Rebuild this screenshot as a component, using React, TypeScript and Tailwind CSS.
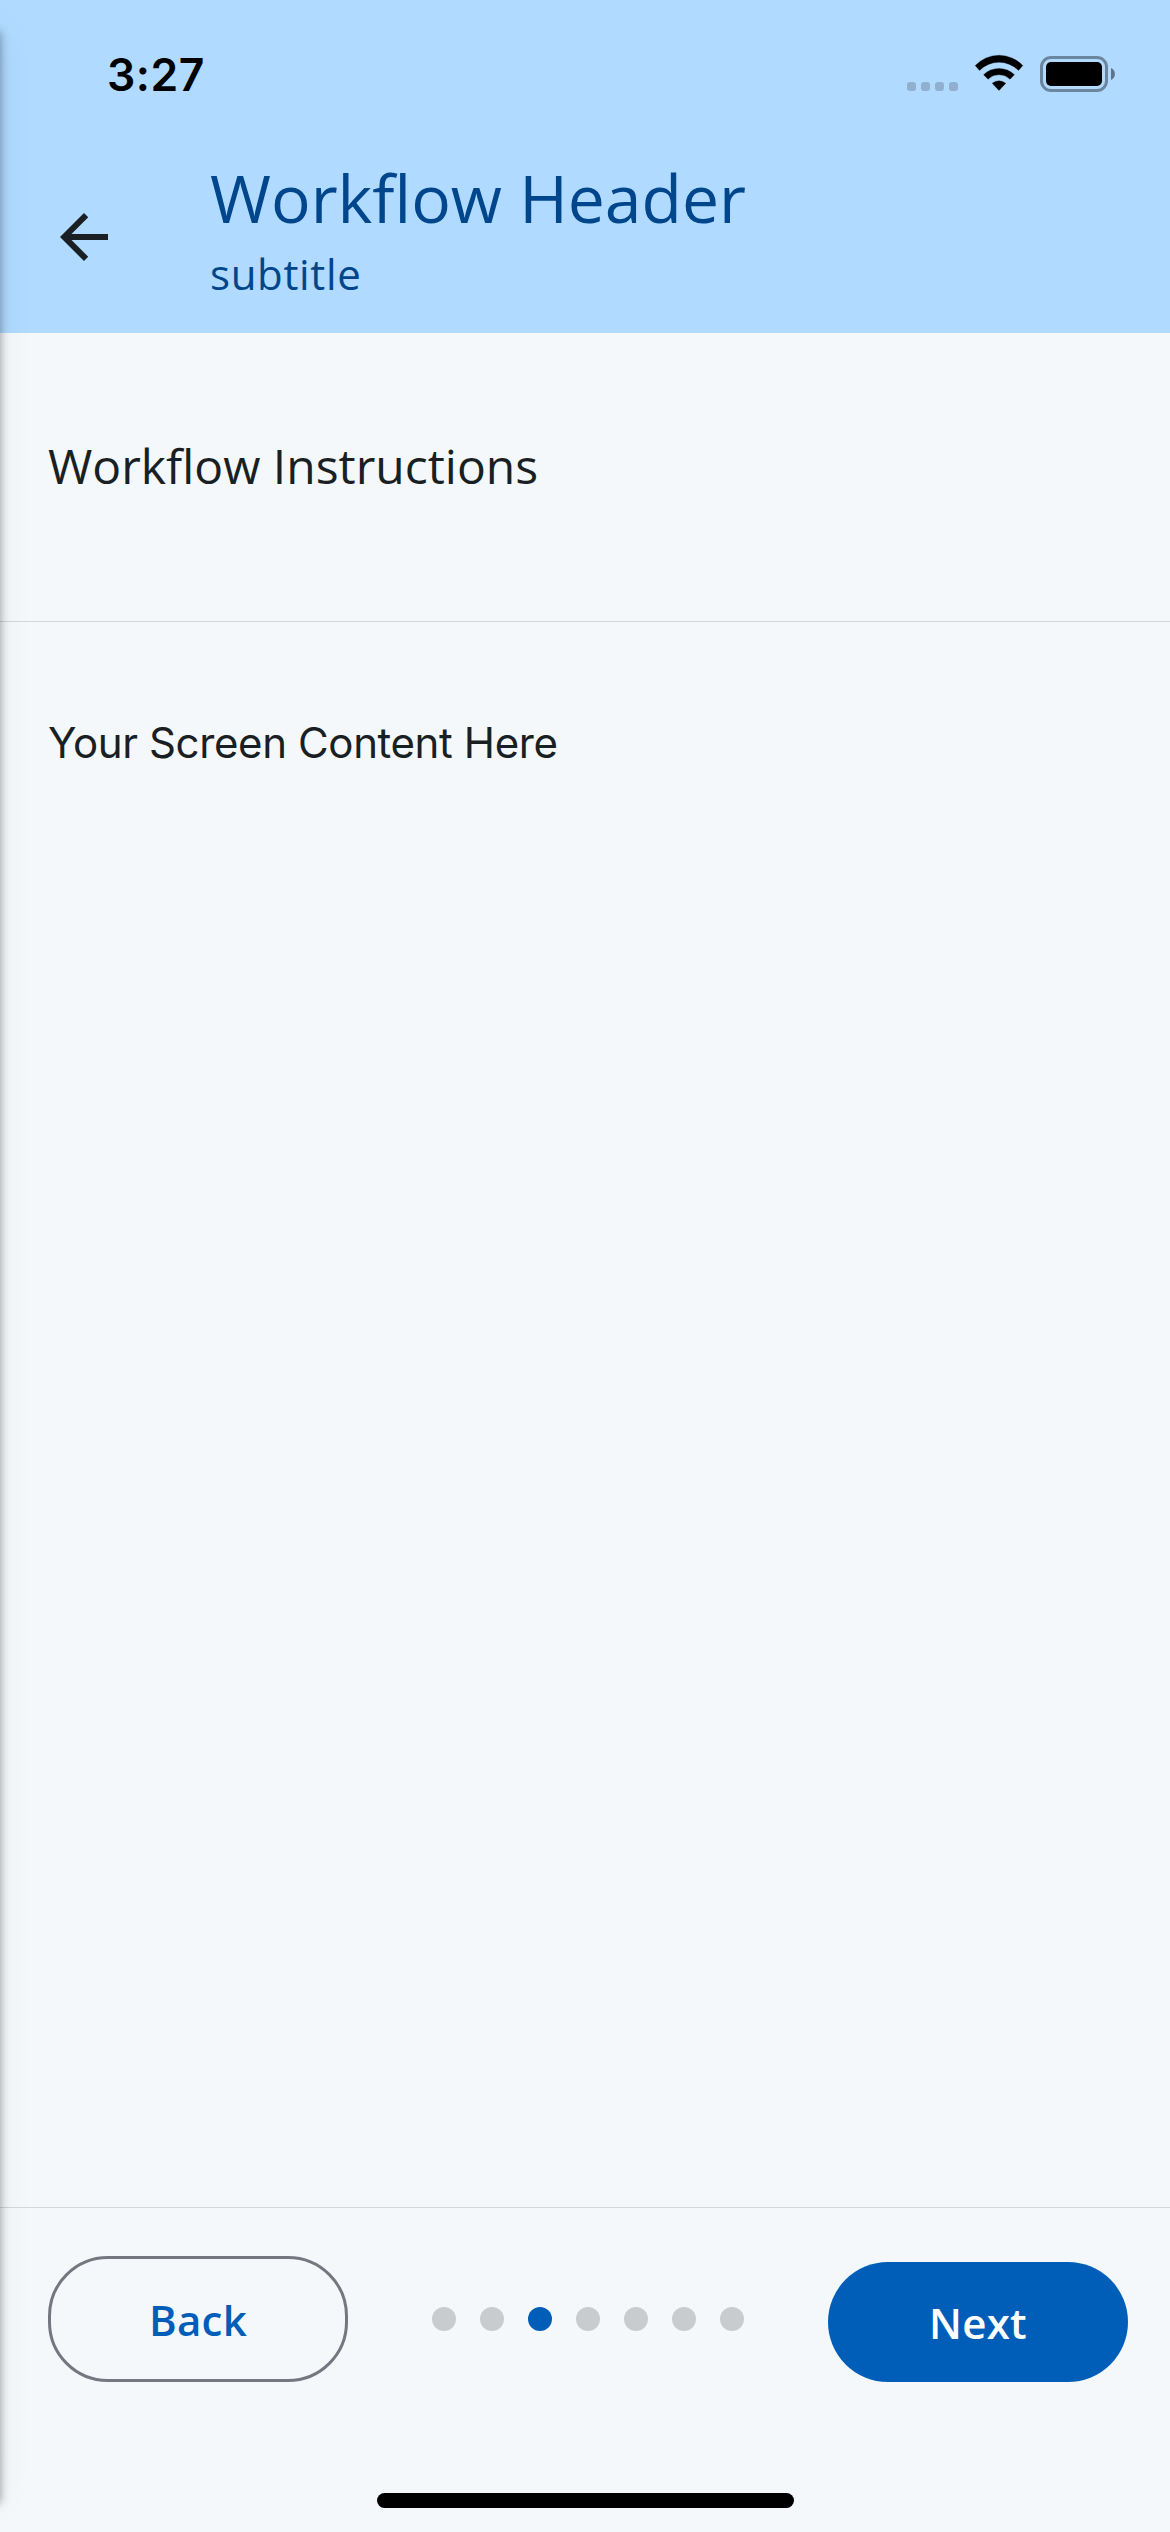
const STEPS = 7;
const ACTIVE_STEP = 2;

function StatusBar() {
  return (
    <div className="flex h-[141px] items-start justify-between pl-[107px] pr-[54px]">
      <div className="mt-[47px] font-['Inter',sans-serif] text-[44.5px] font-semibold leading-[56px] tracking-[0.5px] text-black">3:27</div>
      <div className="mt-[50px] flex">
        <div className="mt-[32px] flex gap-[5px]">
          {[0, 1, 2, 3].map((i) => (
            <span key={i} className="size-[9px] rounded-[3px] bg-[#91afce]" />
          ))}
        </div>
        <svg className="ml-[15px] h-[46px] w-[52px]" viewBox="0 0 52 46" fill="#000" stroke="#000" strokeWidth="0.3" strokeLinejoin="round">
          <path d="M2.2 15.6a32.5 32.5 0 0 1 47.6 0L45.5 20.4a27.5 27.5 0 0 0-39 0Z" />
          <path d="M10.6 24.7a22 22 0 0 1 30.8 0L37 29.2a16 16 0 0 0-22 0Z" />
          <path d="M19.2 33.3a10.5 10.5 0 0 1 13.6 0L26 40.4Z" />
        </svg>
        <svg className="ml-[15px] h-[46px] w-[76px]" viewBox="0 0 76 46">
          <rect x="1.5" y="7.5" width="65" height="33" rx="9.5" fill="none" stroke="#6d86a0" strokeWidth="3" />
          <rect x="6" y="12" width="56" height="24" rx="5" fill="#000" />
          <path d="M71 18a6.6 6.6 0 0 1 0 12Z" fill="#5d738a" />
        </svg>
      </div>
    </div>
  );
}

export default function App() {
  return (
    <div className="relative flex h-[2532px] w-[1170px] flex-col overflow-hidden bg-[#f4f8fb] font-['Open_Sans',sans-serif] text-[#191f22]">
      <header className="h-[333px] bg-[#b0daff]">
        <StatusBar />
        <div className="flex">
          <button className="ml-12 mt-[60px] size-[72px]" aria-label="Go back">
            <svg viewBox="0 0 24 24" fill="currentColor">
              <path d="M20 11H7.83l5.59-5.59L12 4l-8 8 8 8 1.41-1.41L7.83 13H20z" />
            </svg>
          </button>
          <div className="ml-[90px] mt-[11px] text-[#00468c]">
            <h1 className="text-[66px] leading-[90px]">Workflow Header</h1>
            <p className="mt-[2px] text-[42px] leading-[60px] tracking-[0.65px]">subtitle</p>
          </div>
        </div>
      </header>

      <section className="h-[289px] border-b border-[#d2d7da] pl-12 pt-[100px]">
        <p className="text-[48px] leading-[66px]">Workflow Instructions</p>
      </section>

      <main className="flex-1 pl-12 pt-[91px]">
        <p className="font-['Inter',sans-serif] text-[42px] leading-[60px] tracking-[-0.38px]">Your Screen Content Here</p>
      </main>

      <footer className="h-[325px] border-t border-[#d2d7da]">
        <div className="mt-12 flex h-[126px] items-center justify-between pl-12 pr-[42px]">
          <button className="h-[126px] w-[300px] rounded-[60px] border-3 border-[#74777f] text-[42px] font-semibold tracking-[0.3px] text-[#005eb8]">
            Back
          </button>
          <div className="flex gap-6">
            {Array.from({ length: STEPS }, (_, i) => (
              <span key={i} className={i === ACTIVE_STEP ? "size-6 rounded-full bg-[#005eb8]" : "size-6 rounded-full bg-[#c8cccf]"} />
            ))}
          </div>
          <button className="h-[120px] w-[300px] self-end rounded-[60px] bg-[#005eb8] text-[42px] font-semibold tracking-[0.3px] text-white">
            Next
          </button>
        </div>
        <div className="mx-auto mt-[111px] h-[15px] w-[417px] rounded-full bg-black" />
      </footer>

      {/* Edge shadow cast by the off-screen drawer */}
      <div className="pointer-events-none absolute -left-10 bottom-[29px] top-[32px] w-10 shadow-[0_0_9px_rgba(0,0,0,0.38),0_0_36px_rgba(0,0,0,0.06)]" />
    </div>
  );
}
